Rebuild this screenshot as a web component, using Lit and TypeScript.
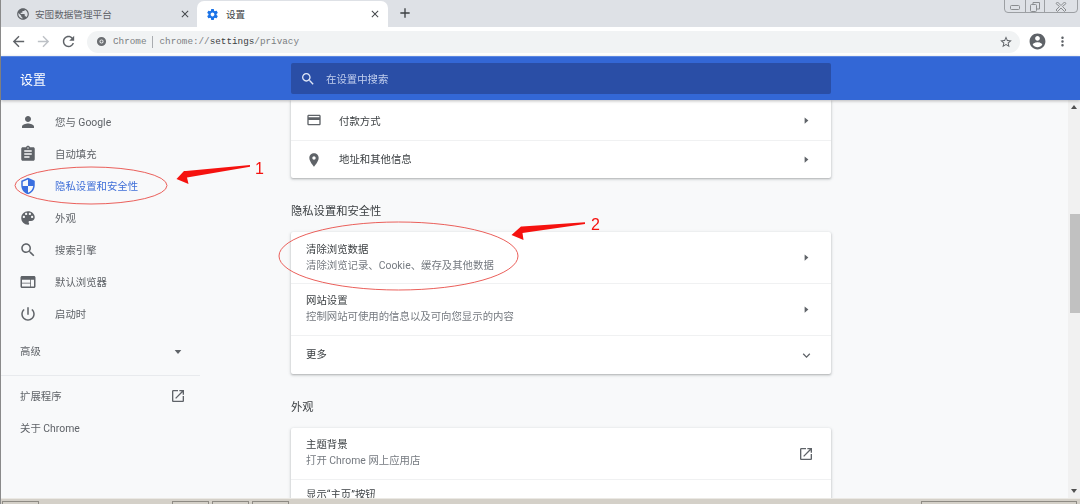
import { LitElement, html, css, svg } from "lit";
import { customElement } from "lit/decorators.js";

const P: Record<string, string> = {
  person: "M12 12c2.21 0 4-1.79 4-4s-1.79-4-4-4-4 1.79-4 4 1.79 4 4 4zm0 2c-2.67 0-8 1.34-8 4v2h16v-2c0-2.66-5.33-4-8-4z",
  assignment: "M19 3h-4.18C14.4 1.84 13.3 1 12 1c-1.3 0-2.4.84-2.82 2H5c-1.1 0-2 .9-2 2v14c0 1.1.9 2 2 2h14c1.1 0 2-.9 2-2V5c0-1.1-.9-2-2-2zm-7 0c.55 0 1 .45 1 1s-.45 1-1 1-1-.45-1-1 .45-1 1-1zm2 14H7v-2h7v2zm3-4H7v-2h10v2zm0-4H7V7h10v2z",
  security: "M12 1L3 5v6c0 5.55 3.84 10.74 9 12 5.16-1.26 9-6.45 9-12V5l-9-4zm0 10.99h7c-.53 4.12-3.28 7.79-7 8.94V12H5V6.3l7-3.11v8.8z",
  palette: "M12 3c-4.97 0-9 4.03-9 9s4.03 9 9 9c.83 0 1.5-.67 1.5-1.5 0-.39-.15-.74-.39-1.01-.23-.26-.38-.61-.38-.99 0-.83.67-1.5 1.5-1.5H16c2.76 0 5-2.24 5-5 0-4.42-4.03-8-9-8zm-5.5 9c-.83 0-1.5-.67-1.5-1.5S5.67 9 6.5 9 8 9.67 8 10.5 7.33 12 6.5 12zm3-4C8.67 8 8 7.33 8 6.5S8.67 5 9.5 5s1.5.67 1.5 1.5S10.33 8 9.5 8zm5 0c-.83 0-1.5-.67-1.5-1.5S13.67 5 14.5 5s1.5.67 1.5 1.5S15.33 8 14.5 8zm3 4c-.83 0-1.5-.67-1.5-1.5S16.67 9 17.5 9s1.5.67 1.5 1.5-.67 1.5-1.5 1.5z",
  search: "M15.5 14h-.79l-.28-.27C15.41 12.59 16 11.11 16 9.5 16 5.91 13.09 3 9.5 3S3 5.91 3 9.5 5.91 16 9.5 16c1.61 0 3.09-.59 4.23-1.57l.27.28v.79l5 4.99L20.49 19l-4.99-5zm-6 0C7.01 14 5 11.99 5 9.5S7.01 5 9.5 5 14 7.01 14 9.5 11.99 14 9.5 14z",
  web: "M20 4H4c-1.1 0-2 .9-2 2v12c0 1.1.9 2 2 2h16c1.1 0 2-.9 2-2V6c0-1.1-.9-2-2-2zm-5 14H4v-4h11v4zm0-5H4V9h11v4zm5 5h-4V9h4v9z",
  power: "M13 3h-2v10h2V3zm4.83 2.17l-1.42 1.42C17.99 7.86 19 9.81 19 12c0 3.87-3.13 7-7 7s-7-3.13-7-7c0-2.19 1.01-4.14 2.58-5.42L6.17 5.17C4.23 6.82 3 9.26 3 12c0 4.97 4.03 9 9 9s9-4.03 9-9c0-2.74-1.23-5.18-3.17-6.83z",
  open: "M19 19H5V5h7V3H5c-1.11 0-2 .9-2 2v14c0 1.1.89 2 2 2h14c1.1 0 2-.9 2-2v-7h-2v7zM14 3v2h3.59l-9.83 9.83 1.41 1.41L19 6.41V10h2V3h-7z",
  card: "M20 4H4c-1.11 0-1.99.89-1.99 2L2 18c0 1.11.89 2 2 2h16c1.11 0 2-.89 2-2V6c0-1.11-.89-2-2-2zm0 14H4v-6h16v6zm0-10H4V6h16v2z",
  place: "M12 2C8.13 2 5 5.13 5 9c0 5.25 7 13 7 13s7-7.75 7-13c0-3.87-3.13-7-7-7zm0 9.5c-1.38 0-2.5-1.12-2.5-2.5s1.12-2.5 2.5-2.5 2.5 1.12 2.5 2.5-1.12 2.5-2.5 2.5z",
  gear: "M19.43 12.98c.04-.32.07-.64.07-.98s-.03-.66-.07-.98l2.11-1.65c.19-.15.24-.42.12-.64l-2-3.46c-.12-.22-.39-.3-.61-.22l-2.49 1c-.52-.4-1.08-.73-1.69-.98l-.38-2.65C14.46 2.18 14.25 2 14 2h-4c-.25 0-.46.18-.49.42l-.38 2.65c-.61.25-1.17.59-1.69.98l-2.49-1c-.23-.09-.49 0-.61.22l-2 3.46c-.13.22-.07.49.12.64l2.11 1.65c-.04.32-.07.65-.07.98s.03.66.07.98l-2.11 1.65c-.19.15-.24.42-.12.64l2 3.46c.12.22.39.3.61.22l2.49-1c.52.4 1.08.73 1.69.98l.38 2.65c.03.24.24.42.49.42h4c.25 0 .46-.18.49-.42l.38-2.65c.61-.25 1.17-.59 1.69-.98l2.49 1c.23.09.49 0 .61-.22l2-3.46c.12-.22.07-.49-.12-.64l-2.11-1.65zM12 15.5c-1.93 0-3.5-1.57-3.5-3.5s1.57-3.5 3.5-3.5 3.5 1.57 3.5 3.5-1.57 3.5-3.5 3.5z",
  account: "M12 2C6.48 2 2 6.48 2 12s4.48 10 10 10 10-4.48 10-10S17.52 2 12 2zm0 3c1.66 0 3 1.34 3 3s-1.34 3-3 3-3-1.34-3-3 1.34-3 3-3zm0 14.2c-2.5 0-4.71-1.28-6-3.22.03-1.99 4-3.08 6-3.08 1.99 0 5.97 1.09 6 3.08-1.29 1.94-3.5 3.22-6 3.22z",
  globe: "M12 2C6.48 2 2 6.48 2 12s4.48 10 10 10 10-4.48 10-10S17.52 2 12 2zm-1 17.93c-3.95-.49-7-3.85-7-7.93 0-.62.08-1.21.21-1.79L9 15v1c0 1.1.9 2 2 2v1.93zm6.9-2.54c-.26-.81-1-1.39-1.9-1.39h-1v-3c0-.55-.45-1-1-1H8v-2h2c.55 0 1-.45 1-1V7h2c1.1 0 2-.9 2-2v-.41c2.93 1.19 5 4.06 5 7.41 0 2.08-.8 3.97-2.1 5.39z",
  star: "M22 9.24l-7.19-.62L12 2 9.19 8.63 2 9.24l5.46 4.73L5.82 21 12 17.27 18.18 21l-1.63-7.03L22 9.24zM12 15.4l-3.76 2.27 1-4.28-3.32-2.88 4.38-.38L12 6.1l1.71 4.04 4.38.38-3.32 2.88 1 4.28L12 15.4z",
  refresh: "M17.65 6.35C16.2 4.9 14.21 4 12 4c-4.42 0-7.99 3.58-7.99 8s3.57 8 7.99 8c3.73 0 6.84-2.55 7.73-6h-2.08c-.82 2.33-3.04 4-5.65 4-3.31 0-6-2.69-6-6s2.69-6 6-6c1.66 0 3.14.69 4.22 1.78L13 11h7V4l-2.35 2.35z",
  back: "M20 11H7.83l5.59-5.59L12 4l-8 8 8 8 1.41-1.41L7.83 13H20v-2z",
  forward: "M12 4l-1.41 1.41L16.17 11H4v2h12.17l-5.58 5.59L12 20l8-8z",
  close: "M19 6.41L17.59 5 12 10.59 6.41 5 5 6.41 10.59 12 5 17.59 6.41 19 12 13.41 17.59 19 19 17.59 13.41 12z",
  plus: "M19 13h-6v6h-2v-6H5v-2h6V5h2v6h6v2z",
  dots: "M12 8c1.1 0 2-.9 2-2s-.9-2-2-2-2 .9-2 2 .9 2 2 2zm0 2c-1.1 0-2 .9-2 2s.9 2 2 2 2-.9 2-2-.9-2-2-2zm0 6c-1.1 0-2 .9-2 2s.9 2 2 2 2-.9 2-2-.9-2-2-2z",
  right: "M9 7l6 5-6 5z",
  down: "M7 9l5 6 5-6z",
  chevron: "M16.59 8.59L12 13.17 7.41 8.59 6 10l6 6 6-6z",
  chrome: "M12 2a10 10 0 1 0 0 20 10 10 0 0 0 0-20zm0 5.5a4.5 4.5 0 1 1 0 9 4.5 4.5 0 0 1 0-9zM12 9.5a2.5 2.5 0 1 0 0 5 2.5 2.5 0 0 0 0-5z",
};

const icon = (name: string, cls = "") =>
  html`<svg class="ic ${cls}" viewBox="0 0 24 24"><path d=${P[name]}></path></svg>`;

const NAV = [
  ["person", "您与 Google"],
  ["assignment", "自动填充"],
  ["security", "隐私设置和安全性", true],
  ["palette", "外观"],
  ["search", "搜索引擎"],
  ["web", "默认浏览器"],
  ["power", "启动时"],
] as [string, string, boolean?][];

@customElement("app-root")
export class AppRoot extends LitElement {
  static styles = css`
    :host {
      display: block;
      width: 1080px;
      height: 504px;
      overflow: hidden;
      position: relative;
      font-family: "Roboto", "Noto Sans CJK SC", sans-serif;
      background: #f8f9fa;
    }
    .page { display: flex; flex-direction: column; height: 504px; border-left: 1px solid #8a8a8a; box-sizing: border-box; filter: blur(0.3px); }
    .ic { display: block; fill: currentColor; flex: none; }

    .strip { height: 27px; background: #dee1e6; display: flex; align-items: flex-end; flex: none; position: relative; }
    .tab { height: 26px; display: flex; align-items: center; font-size: 9.6px; box-sizing: border-box; }
    .tab1 { width: 196px; padding-left: 15px; color: #5f6368; }
    .tab1 .ic:first-child { width: 14px; height: 14px; color: #5f6368; }
    .tab2 { width: 191px; padding-left: 9px; background: #fff; border-radius: 7px 7px 0 0; color: #3c4043; }
    .tab2 .ic:first-child { width: 13px; height: 13px; color: #1a73e8; }
    .tab .lbl { margin-left: 5px; flex: 1; }
    .tab2 .lbl { margin-left: 7px; }
    .tab .x { width: 12px; height: 12px; color: #45484c; margin-right: 6px; }
    .tab2 .x { margin-right: 7px; }
    .plus { width: 16px; height: 16px; color: #3c4043; margin: 0 0 6px 9px; }
    .winbtns { position: absolute; right: 2px; top: -1px; width: 74px; height: 14px; border: 1px solid #9c9fa3; border-radius: 0 0 4px 4px; box-sizing: border-box; display: flex; color: #8a8d90; }
    .winbtns span { display: flex; align-items: center; justify-content: center; border-right: 1px solid #9c9fa3; box-sizing: border-box; }
    .winbtns span:last-child { border-right: 0; flex: 1; }
    .w1 { width: 21px; }
    .w2 { width: 19px; }
    .winbtns svg { width: 12px; height: 11px; fill: none; stroke: currentColor; stroke-width: 1; }

    .toolbar { height: 29px; background: #fff; flex: none; display: flex; align-items: center; color: #5f6368; }
    .nav1 { width: 17px; height: 17px; margin-left: 9px; }
    .nav2 { width: 17px; height: 17px; margin-left: 8px; color: #bdc1c6; }
    .nav3 { width: 17px; height: 17px; margin-left: 8px; }
    .omni { margin: 0 0 0 10px; width: 933px; height: 22px; background: #f1f3f4; border-radius: 11px; display: flex; align-items: center; font-family: "Liberation Mono", monospace; font-size: 9.3px; color: #7b7e82; box-sizing: border-box; padding-left: 9px; }
    .omni .cr { width: 11px; height: 11px; color: #6b6e72; margin-right: 6px; }
    .omni .sep { width: 1px; height: 12px; background: #a9acb0; margin: 0 6px; }
    .omni b { font-weight: normal; color: #3c4043; }
    .omni .st { width: 14px; height: 14px; margin-left: auto; margin-right: 7px; color: #5f6368; }
    .acct { width: 19px; height: 19px; margin-left: 8px; color: #5f6368; }
    .dots { width: 15px; height: 15px; margin-left: 8px; color: #5f6368; }

    .head { height: 44px; flex: none; background: #3367d6; border-top: 1px solid #5b86e0; box-sizing: border-box; display: flex; align-items: center; color: #fff; position: relative; z-index: 2; box-shadow: 0 1px 3px rgba(60, 64, 67, 0.35); }
    .head .ttl { width: 290px; padding-left: 19px; box-sizing: border-box; font-size: 13px; flex: none; }
    .sbox { width: 540px; height: 31px; background: #2a4ea6; border-radius: 2px; display: flex; align-items: center; color: #c2cfee; font-size: 10.4px; }
    .sbox .ic { width: 16px; height: 16px; margin: 0 10px 0 9px; color: #dfe6f7; }

    .body { flex: 1; display: flex; min-height: 0; overflow: hidden; }
    .side { width: 290px; flex: none; padding-top: 6px; box-sizing: border-box; font-size: 10.4px; color: #5f6368; }
    .side span { padding-bottom: 2px; }
    .item { height: 32px; display: flex; align-items: center; padding-left: 18px; }
    .item .ic { width: 18px; height: 18px; margin-right: 18px; color: #5f6368; }
    .item.on { color: #3f6fd8; }
    .item.on .ic { color: #3a6fe0; }
    .plain { height: 32px; width: 199px; box-sizing: border-box; padding: 0 14px 0 19px; display: flex; align-items: center; justify-content: space-between; }
    .adv { margin-top: 5px; }
    .adv .ic { width: 16px; height: 16px; margin-top: 1px; }
    .ext .ic { width: 16px; height: 16px; }
    .div { width: 199px; height: 1px; background: #e8eaed; margin: 8px 0 4px; }

    .col { width: 540px; flex: none; }
    .card { background: #fff; border-radius: 2px; box-shadow: 0 1px 2px rgba(60, 64, 67, 0.3), 0 1px 3px 1px rgba(60, 64, 67, 0.1); }
    .card.first { border-radius: 0 0 2px 2px; }
    .row { display: flex; align-items: center; justify-content: space-between; padding: 0 17px 0 15px; box-sizing: border-box; border-top: 1px solid #f0f1f2; color: #3c4043; font-size: 10.4px; }
    .row:first-child { border-top: 0; }
    .r40 { height: 40px; }
    .r38 { height: 38px; }
    .r39 { height: 39px; }
    .r51 { height: 51px; }
    .r52 { height: 52px; }
    .r52 > span, .lift > span:first-child { padding-bottom: 2px; }
    .r39 > span { padding-bottom: 3px; }
    .r38 .txt { padding-bottom: 2px; }
    .tall { height: 40px; align-items: flex-start; padding-top: 8px; }
    .sec { display: block; color: #757a80; margin-top: 2px; line-height: 14px; }
    .tt { display: block; line-height: 14px; }
    .row .ic { width: 15px; height: 15px; color: #5f6368; }
    .row .lead { display: flex; align-items: center; }
    .row .lead .ic { margin-right: 17px; width: 16px; height: 16px; }
    .row .arr { width: 15px; height: 15px; }
    .row .ext { width: 16px; height: 16px; }
    .h { height: 54px; box-sizing: border-box; padding-bottom: 12px; display: flex; align-items: flex-end; font-size: 11.3px; line-height: 16px; color: #3c4043; }

    .sb { width: 12px; margin-left: auto; background: #f1f1f1; position: relative; flex: none; display: flex; flex-direction: column; align-items: center; justify-content: space-between; padding: 5px 0; box-sizing: border-box; color: #505050; }
    .sb i { display: block; width: 0; height: 0; border: 3px solid transparent; }
    .sb .up { border-top: 0; border-bottom: 4px solid currentColor; }
    .sb .dn { border-bottom: 0; border-top: 4px solid currentColor; }
    .thumb { position: absolute; left: 2px; top: 114px; width: 10px; height: 99px; background: #c1c1c1; }

    .foot { height: 6px; flex: none; background: #d4d0c8; border-top: 1px solid #ebe9e4; box-sizing: border-box; position: relative; z-index: 3; display: flex; align-items: flex-end; }
    .foot span { height: 3px; border: 1px solid #8e8b84; border-bottom: 0; box-sizing: border-box; margin-left: 3px; }
    .f0 { width: 37px; margin-left: 1px !important; }
    .f1 { width: 37px; margin-left: 133px !important; }
    .f2 { width: 37px; }
    .f3 { width: 37px; }
    .f4 { width: 156px; margin-left: 632px !important; }

    .over { position: absolute; left: 0; top: 0; width: 1080px; height: 504px; pointer-events: none; z-index: 5; }
    .over ellipse { fill: none; stroke: #ea5f5a; stroke-width: 1; }
    .over polygon { fill: #f5120f; }
    .over text { fill: #f5120f; font-family: "Liberation Sans", sans-serif; font-size: 16px; }
  `;

  render() {
    return html`
      <div class="page">
        <div class="strip">
          <div class="tab tab1">${icon("globe")}<span class="lbl">安图数据管理平台</span>${icon("close", "x")}</div>
          <div class="tab tab2">${icon("gear")}<span class="lbl">设置</span>${icon("close", "x")}</div>
          ${icon("plus", "plus")}
          <div class="winbtns">
            <span class="w1"><svg viewBox="0 0 12 11"><rect x="1.5" y="4.5" width="9" height="4" rx="1"></rect></svg></span>
            <span class="w2"><svg viewBox="0 0 12 11"><rect x="1.5" y="3.5" width="6" height="7" rx="1"></rect><path d="M4 3V1.5h6.5V8H8"></path></svg></span>
            <span><svg viewBox="0 0 12 11"><path d="M2.5 1L6 4.5 9.5 1 11 2.5 7.5 5.5 11 9 9.5 10.5 6 7 2.5 10.5 1 9 4.5 5.5 1 2.5z"></path></svg></span>
          </div>
        </div>
        <div class="toolbar">
          ${icon("back", "nav1")}${icon("forward", "nav2")}${icon("refresh", "nav3")}
          <div class="omni">
            ${icon("chrome", "cr")}<span>Chrome</span><span class="sep"></span>
            <span>chrome://<b>settings</b>/privacy</span>
            ${icon("star", "st")}
          </div>
          ${icon("account", "acct")}${icon("dots", "dots")}
        </div>
        <div class="head">
          <div class="ttl">设置</div>
          <div class="sbox">${icon("search")}<span>在设置中搜索</span></div>
        </div>
        <div class="body">
          <nav class="side">
            ${NAV.map(([i, t, on]) => html`<div class="item ${on ? "on" : ""}">${icon(i)}<span>${t}</span></div>`)}
            <div class="plain adv"><span>高级</span>${icon("down")}</div>
            <div class="div"></div>
            <div class="plain ext"><span>扩展程序</span>${icon("open")}</div>
            <div class="plain"><span>关于 Chrome</span></div>
          </nav>
          <div class="col">
            <div class="card first">
              <div class="row r40"><span class="lead">${icon("card")}<span>付款方式</span></span>${icon("right", "arr")}</div>
              <div class="row r38"><span class="lead">${icon("place")}<span class="txt">地址和其他信息</span></span>${icon("right", "arr")}</div>
            </div>
            <div class="h">隐私设置和安全性</div>
            <div class="card">
              <div class="row r51"><span><span class="tt">清除浏览数据</span><span class="sec">清除浏览记录、Cookie、缓存及其他数据</span></span>${icon("right", "arr")}</div>
              <div class="row r52"><span><span class="tt">网站设置</span><span class="sec">控制网站可使用的信息以及可向您显示的内容</span></span>${icon("right", "arr")}</div>
              <div class="row r39"><span>更多</span>${icon("chevron", "arr")}</div>
            </div>
            <div class="h">外观</div>
            <div class="card">
              <div class="row r51 lift"><span><span class="tt">主题背景</span><span class="sec">打开 Chrome 网上应用店</span></span>${icon("open", "ext")}</div>
              <div class="row tall"><span class="tt">显示“主页”按钮</span></div>
            </div>
          </div>
          <div class="sb"><i class="up"></i><i class="dn"></i><div class="thumb"></div></div>
        </div>
        <div class="foot"><span class="f0"></span><span class="f1"></span><span class="f2"></span><span class="f3"></span><span class="f4"></span></div>
      </div>
      <svg class="over" viewBox="0 0 1080 504">
        ${svg`
          <ellipse cx="91" cy="185.5" rx="76" ry="18.5"></ellipse>
          <ellipse cx="398.5" cy="256" rx="119.5" ry="34"></ellipse>
          <polygon points="250,165 186,171 184,171 176.5,179 188.5,184 187,177.5 250,166.8"></polygon>
          <polygon points="585,222.2 522,226.5 521,226.5 511.5,235 523.5,240 522.5,233 585,224"></polygon>
          <text x="255" y="174">1</text>
          <text x="591" y="230">2</text>
        `}
      </svg>
    `;
  }
}
